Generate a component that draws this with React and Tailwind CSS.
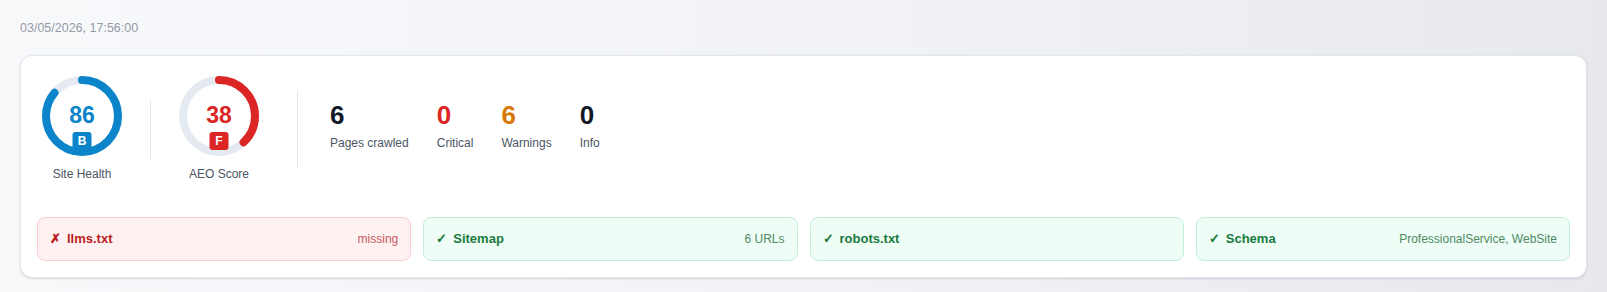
const C = 2 * Math.PI * 36;

const Gauge = ({ value, grade, label, color, badge }) => {
  return (
    <div className="flex w-20 flex-col items-center">
      <div className="relative h-20 w-20">
        <svg width="80" height="80" viewBox="0 0 80 80" className="-rotate-90">
          <circle cx="40" cy="40" r="36" fill="none" stroke="#e5e9f0" strokeWidth="8" />
          <circle
            cx="40"
            cy="40"
            r="36"
            fill="none"
            stroke={color}
            strokeWidth="8"
            strokeLinecap="round"
            strokeDasharray={`${(value / 100) * C} ${C}`}
          />
        </svg>
        <span
          className="absolute left-0 right-0 top-[26px] text-center text-[23px] font-bold leading-[26px]"
          style={{ color }}
        >
          {value}
        </span>
        <span
          className={`absolute left-1/2 top-[56px] flex h-[18px] w-[19px] -translate-x-1/2 items-center justify-center rounded-[3px] text-[12px] font-bold text-white ${badge}`}
        >
          {grade}
        </span>
      </div>
      <div className="mt-2.5 whitespace-nowrap text-[12px] leading-4 text-[#4b5563]">{label}</div>
    </div>
  );
};

const Stat = ({ value, label, color }) => (
  <div className="flex flex-col">
    <span className={`text-[26px] font-bold leading-8 ${color}`}>{value}</span>
    <span className="mt-1 text-[12px] leading-4 text-[#4b5563]">{label}</span>
  </div>
);

const Check = ({ ok, name, detail }) => (
  <div
    className={
      ok
        ? "flex items-center justify-between rounded-lg border border-[#c3efd8] bg-[#eefdf5] px-3 py-3"
        : "flex items-center justify-between rounded-lg border border-[#fbcdd2] bg-[#fef1f2] px-3 py-3"
    }
  >
    <div className={`flex items-center gap-2 text-[13px] font-bold leading-[18px] ${ok ? "text-[#1a7a40]" : "text-[#b91c1c]"}`}>
      <span className="w-[9px]">{ok ? "✓" : "✗"}</span>
      <span>{name}</span>
    </div>
    {detail && (
      <span className={`text-[12px] ${ok ? "text-[#4f8a64]" : "text-[#c8585e]"}`}>{detail}</span>
    )}
  </div>
);

export default function App() {
  return (
    <div
      className="min-h-[292px] bg-gradient-to-r from-[#f8f9fb] via-[#f2f3f6] to-[#e7e9ef] px-5 pt-5 pb-4"
      style={{ fontFamily: '"Liberation Sans", Arial, sans-serif' }}
    >
      <div className="text-[12.5px] leading-4 text-[#949aa6]">03/05/2026, 17:56:00</div>

      <div className="mt-[19px] rounded-xl border border-[#e3e6ec] bg-white px-4 pt-5 pb-4 shadow-sm">
        {/* scores */}
        <div className="flex items-center pl-[5px]">
          <div className="flex items-center gap-7">
            <Gauge value={86} grade="B" label="Site Health" color="#0b84c9" badge="bg-[#0b84c9]" />
            <div className="h-[60px] w-px bg-[#e5e7eb]" />
            <Gauge value={38} grade="F" label="AEO Score" color="#dc2626" badge="bg-[#dc2626]" />
          </div>
          <div className="ml-[38px] h-[79px] w-px bg-[#e5e7eb]" />
          <div className="ml-8 mb-[8px] flex gap-7">
            <Stat value={6} label="Pages crawled" color="text-[#111827]" />
            <Stat value={0} label="Critical" color="text-[#dc2626]" />
            <Stat value={6} label="Warnings" color="text-[#d97706]" />
            <Stat value={0} label="Info" color="text-[#111827]" />
          </div>
        </div>

        {/* checks */}
        <div className="mt-[35px] grid grid-cols-4 gap-3">
          <Check ok={false} name="llms.txt" detail="missing" />
          <Check ok name="Sitemap" detail="6 URLs" />
          <Check ok name="robots.txt" />
          <Check ok name="Schema" detail="ProfessionalService, WebSite" />
        </div>
      </div>
    </div>
  );
}
